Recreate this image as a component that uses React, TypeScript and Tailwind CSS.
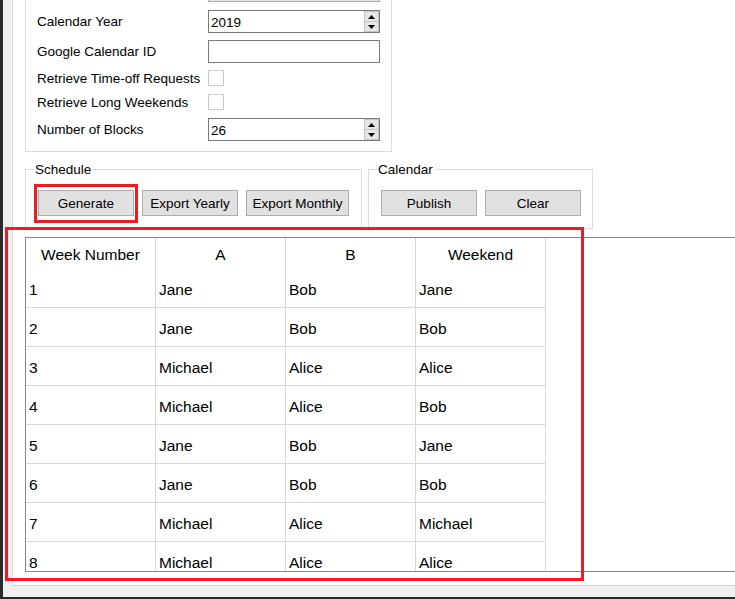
import React from 'react'

const weeks = [
    ['1', 'Jane', 'Bob', 'Jane'],
    ['2', 'Jane', 'Bob', 'Bob'],
    ['3', 'Michael', 'Alice', 'Alice'],
    ['4', 'Michael', 'Alice', 'Bob'],
    ['5', 'Jane', 'Bob', 'Jane'],
    ['6', 'Jane', 'Bob', 'Bob'],
    ['7', 'Michael', 'Alice', 'Michael'],
    ['8', 'Michael', 'Alice', 'Alice'],
]

const columns = ['Week Number', 'A', 'B', 'Weekend']

function Arrow({ down }: { down?: boolean }) {
    return (
        <svg width="7" height="4" viewBox="0 0 7 4" className="block">
            <path d={down ? 'M0 0H7L3.5 4Z' : 'M3.5 0L7 4H0Z'} fill="#000" />
        </svg>
    )
}

function SpinBox({ value }: { value: string }) {
    return (
        <div className="flex h-[23px] w-[172px] border border-[#7a7a7a] bg-white">
            <div className="flex-1 pl-[2px] pt-px leading-[21px]">{value}</div>
            <div className="flex w-[15px] flex-col">
                <div className="flex flex-1 items-center justify-center border border-[#c4c4c4] bg-[#e6e6e6]">
                    <Arrow />
                </div>
                <div className="flex flex-1 items-center justify-center border border-t-0 border-[#c4c4c4] bg-[#e6e6e6]">
                    <Arrow down />
                </div>
            </div>
        </div>
    )
}

function Button({ label, width = 'w-[96px]' }: { label: string; width?: string }) {
    return (
        <button className={`h-[26px] ${width} border border-[#adadad] bg-[#e1e1e1] pt-px text-[13.5px] leading-[24px] text-black`}>
            {label}
        </button>
    )
}

function Row({ label, children, height = 'h-[23px]', className = '' }: { label: string; children: React.ReactNode; height?: string; className?: string }) {
    return (
        <div className={`flex ${height} items-center ${className}`}>
            <span className="w-[171px] shrink-0 pt-[2px]">{label}</span>
            {children}
        </div>
    )
}

export default function App() {
    return (
        <div className="relative flex h-[599px] w-[735px] flex-col overflow-hidden bg-[#f0f0f0] font-['Liberation_Sans',Arial,sans-serif] text-black">
            <div className="flex h-[597px]">
                <div className="w-[3px] bg-[#2b2b2b]" />
                <div className="flex-1 pl-[9px]">
                    <div className="flex h-[586px] flex-col border-b border-l border-[#d9d9d9] bg-white pb-[13px] pl-[12px]">
                        {/* Settings group (scrolled, top cut off) */}
                        <div className="-mt-[21px] flex w-[367px] shrink-0 flex-col border-x border-b border-[#dcdcdc] px-[11px] pb-[10px] text-[13.5px]">
                            <Row label="">
                                <div className="h-[23px] w-[172px] border border-[#adadad] bg-[#e5e5e5]" />
                            </Row>
                            <Row label="Calendar Year" className="mt-[8px]">
                                <SpinBox value="2019" />
                            </Row>
                            <Row label="Google Calendar ID" className="mt-[7px]">
                                <div className="h-[23px] w-[172px] border border-[#7a7a7a] bg-white" />
                            </Row>
                            <Row label="Retrieve Time-off Requests" height="h-[16px]" className="mt-[7px]">
                                <div className="h-[16px] w-[16px] border border-[#cccccc] bg-white" />
                            </Row>
                            <Row label="Retrieve Long Weekends" height="h-[16px]" className="mt-[8px]">
                                <div className="h-[16px] w-[16px] border border-[#cccccc] bg-white" />
                            </Row>
                            <Row label="Number of Blocks" className="mt-[8px]">
                                <SpinBox value="26" />
                            </Row>
                        </div>

                        {/* Action groups */}
                        <div className="mt-[10px] flex shrink-0 gap-[6px] text-[13.5px]">
                            <fieldset className="border border-[#dcdcdc] pb-[12px] pl-[12px] pr-[12px] pt-[13px]">
                                <legend className="-ml-[4px] h-[15px] px-px leading-[15px]">Schedule</legend>
                                <div className="flex gap-[8px]">
                                    <Button label="Generate" />
                                    <Button label="Export Yearly" />
                                    <Button label="Export Monthly" width="w-[103px]" />
                                </div>
                            </fieldset>
                            <fieldset className="border border-[#dcdcdc] pb-[12px] pl-[12px] pr-[11px] pt-[13px]">
                                <legend className="-ml-[4px] h-[15px] px-px leading-[15px]">Calendar</legend>
                                <div className="flex gap-[8px]">
                                    <Button label="Publish" />
                                    <Button label="Clear" />
                                </div>
                            </fieldset>
                        </div>

                        {/* Schedule table */}
                        <div className="mt-[8px] min-h-0 flex-1 overflow-hidden border-b border-l border-t border-[#828790] bg-white text-[15.5px]">
                            <div className="grid w-[520px] grid-cols-[130px_130px_130px_130px]">
                                {columns.map((c) => (
                                    <div key={c} className="h-[31px] border-r border-[#d8d8d8] pt-[2px] text-center leading-[29px]">
                                        {c}
                                    </div>
                                ))}
                                {weeks.map((row) =>
                                    row.map((cell, i) => (
                                        <div key={row[0] + '-' + i} className="h-[39px] border-b border-r border-[#d8d8d8] pl-[3px] pt-[3px] leading-[35px]">
                                            {cell}
                                        </div>
                                    ))
                                )}
                            </div>
                        </div>
                    </div>
                </div>
            </div>
            <div className="h-[2px] bg-[#2b2b2b]" />

            {/* Red annotation marks over the screenshot */}
            <div className="pointer-events-none absolute left-[34px] top-[184px] h-[39px] w-[104px] border-[3px] border-[#ed1c24]" />
            <div className="pointer-events-none absolute left-[5px] top-[227px] h-[354px] w-[579px] border-[3px] border-[#ed1c24]" />
        </div>
    )
}
